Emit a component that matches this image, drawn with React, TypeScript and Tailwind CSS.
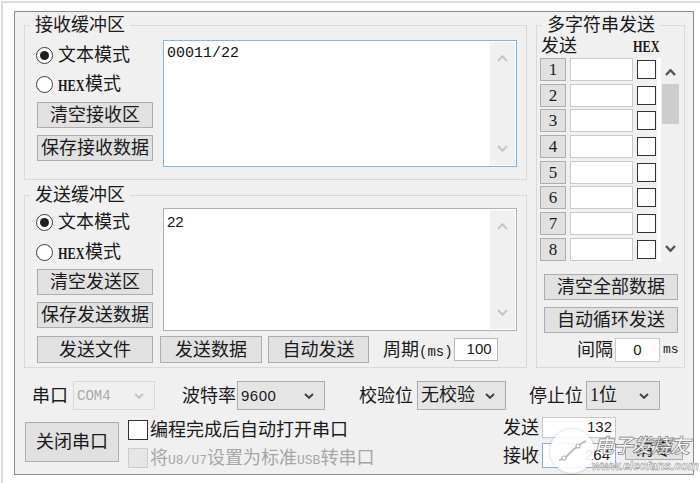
import React from 'react';

function Chev({ up, color, w = 10, h = 6, sw = 2 }: { up?: boolean; color: string; w?: number; h?: number; sw?: number }) {
  return (
    <svg width={w} height={h} viewBox={`0 0 ${w} ${h}`} className="block">
      <polyline
        points={up ? `1,${h - 1} ${w / 2},1.2 ${w - 1},${h - 1}` : `1,1 ${w / 2},${h - 1.2} ${w - 1},1`}
        fill="none"
        stroke={color}
        strokeWidth={sw}
      />
    </svg>
  );
}

function Btn({ children, className = '' }: { children: React.ReactNode; className?: string }) {
  return (
    <div className={`flex items-center justify-center bg-[#e1e1e1] border border-[#adadad] text-[18px] leading-none text-[#1a1a1a] ${className}`}>
      {children}
    </div>
  );
}

function Hex() {
  return (
    <span className="inline-block w-[27px] whitespace-nowrap font-['Liberation_Serif',serif] font-bold text-[17px] leading-none scale-x-[0.72] origin-left align-[-1px]">
      HEX
    </span>
  );
}

function Radio({ checked, hex }: { checked?: boolean; hex?: boolean }) {
  return (
    <div className="flex items-center h-[24px]">
      <div className="w-[17px] h-[17px] rounded-full border border-[#3a3a3a] bg-white flex items-center justify-center">
        {checked && <div className="w-[9px] h-[9px] rounded-full bg-[#1e1e1e]" />}
      </div>
      <span className="ml-[5px] text-[18px] leading-[24px] whitespace-nowrap">
        {hex ? (
          <>
            <Hex />模式
          </>
        ) : (
          '文本模式'
        )}
      </span>
    </div>
  );
}

function TextBox({ className, text, mono }: { className: string; text: string; mono?: boolean }) {
  return (
    <div className={`flex w-[354px] bg-white border ${className}`}>
      <div
        className={`flex-1 pl-[3px] pt-[4px] text-[15px] leading-[18px] text-[#111] ${mono ? "font-['Liberation_Mono',monospace]" : "font-['Liberation_Sans',sans-serif]"}`}
      >
        {text}
      </div>
      <div className="w-[25px] my-[1px] mr-[1px] bg-[#f0f0f0] flex flex-col items-center justify-between py-[13px]">
        <Chev up color="#c6c6c6" w={11} h={7} />
        <Chev color="#c6c6c6" w={11} h={7} />
      </div>
    </div>
  );
}

function Select({ children, disabled, className = '' }: { children: React.ReactNode; disabled?: boolean; className?: string }) {
  return (
    <div
      className={`flex items-center h-[29px] border ${disabled ? 'border-[#d9d9d9] bg-[#f0f0f0] text-[#a8a8a8]' : 'border-[#acacac] bg-[#e5e5e5] text-[#1a1a1a]'} ${className}`}
    >
      <span className="pl-[3px] text-[18px] leading-[27px] whitespace-nowrap">{children}</span>
      <div className="ml-auto mr-[10px]">
        <Chev color={disabled ? '#c4c4c4' : '#444'} w={10} h={6} sw={2} />
      </div>
    </div>
  );
}

function ListRow({ n }: { n: number }) {
  return (
    <div className="flex items-center h-[23px]">
      <Btn className="w-[26px] h-[23px] !text-[17px] font-['Liberation_Serif',serif]">{n}</Btn>
      <div className="ml-[4px] w-[63px] h-[23px] bg-white border border-[#c8c8c8]" />
      <div className="ml-[4px] w-[19px] h-[19px] bg-white border border-[#333]" />
    </div>
  );
}

export default function App() {
  return (
    <div className="relative w-[700px] h-[483px] bg-white pt-[1px] pl-[1px] overflow-hidden font-['Liberation_Sans','Noto_Sans_CJK_SC',sans-serif] text-[#1a1a1a]">
      <div className="h-[482px] border-l-2 border-t-2 border-[#dcdcdc] pl-[11px] pt-[8px]">
        <div className="w-[680px] h-[464px] bg-[#f0f0f0] border border-[#8a8a8a] flex flex-col">
          {/* top groups */}
          <div className="flex pl-[9px] pt-[2px]">
            <div className="flex flex-col">
              {/* 接收缓冲区 */}
              <fieldset className="w-[503px] h-[166px] border border-[#d9d9d9] min-w-0">
                <legend className="ml-[5px] px-[5px] text-[18px] leading-[22px]">接收缓冲区</legend>
                <div className="flex pl-[11px]">
                  <div className="w-[117px] flex flex-col">
                    <div className="mt-[7px]">
                      <Radio checked />
                    </div>
                    <div className="mt-[5px]">
                      <Radio hex />
                    </div>
                    <Btn className="mt-[6px] ml-[1px] w-[116px] h-[26px]">清空接收区</Btn>
                    <Btn className="mt-[7px] ml-[1px] w-[116px] h-[26px]">保存接收数据</Btn>
                  </div>
                  <TextBox className="ml-[10px] mt-[4px] h-[127px] border-[#7eb4ea]" text="00011/22" mono />
                </div>
              </fieldset>

              {/* 发送缓冲区 */}
              <fieldset className="mt-[4px] w-[503px] h-[184px] border border-[#d9d9d9] min-w-0">
                <legend className="ml-[5px] px-[5px] text-[18px] leading-[22px]">发送缓冲区</legend>
                <div className="flex pl-[11px]">
                  <div className="w-[117px] flex flex-col">
                    <div className="mt-[4px]">
                      <Radio checked />
                    </div>
                    <div className="mt-[6px]">
                      <Radio hex />
                    </div>
                    <Btn className="mt-[5px] ml-[1px] w-[116px] h-[26px]">清空发送区</Btn>
                    <Btn className="mt-[7px] ml-[1px] w-[116px] h-[26px]">保存发送数据</Btn>
                  </div>
                  <TextBox className="ml-[10px] mt-[2px] h-[123px] border-[#b0b0b0]" text="22" />
                </div>
                <div className="flex items-center pl-[11px] mt-[5px] h-[27px]">
                  <Btn className="ml-[1px] w-[116px] h-[27px]">发送文件</Btn>
                  <Btn className="ml-[7px] w-[102px] h-[27px]">发送数据</Btn>
                  <Btn className="ml-[6px] w-[101px] h-[27px]">自动发送</Btn>
                  <span className="ml-[14px] text-[18px] leading-none whitespace-nowrap">
                    周期<span className="font-['Liberation_Mono',monospace] text-[14px]">(ms)</span>
                  </span>
                  <div className="ml-[1px] w-[44px] h-[23px] bg-white border border-[#b8b8b8] flex items-center justify-end pr-[5px] text-[15px] font-['Liberation_Sans',sans-serif]">
                    100
                  </div>
                </div>
              </fieldset>
            </div>

            {/* 多字符串发送 */}
            <fieldset className="ml-[9px] w-[149px] h-[354px] border border-[#d9d9d9] min-w-0">
              <legend className="ml-[5px] px-[5px] text-[18px] leading-[22px]">多字符串发送</legend>
              <div className="pl-[3px] flex flex-col">
                <div className="flex items-center h-[20px]">
                  <span className="ml-[1px] text-[18px] leading-[20px]">发送</span>
                  <span className="ml-[56px]">
                    <Hex />
                  </span>
                </div>
                <div className="flex mt-[2px]">
                  <div className="flex flex-col gap-[2.7px]">
                    {[1, 2, 3, 4, 5, 6, 7, 8].map((n) => (
                      <ListRow key={n} n={n} />
                    ))}
                  </div>
                  <div className="ml-[1px] w-[4px] bg-white" />
                  <div className="w-[19px] flex flex-col items-center pt-[11px] pb-[9px]">
                    <Chev up color="#555" w={11} h={7} sw={2.4} />
                    <div className="mt-[8px] w-[17px] h-[40px] bg-[#cdcdcd]" />
                    <div className="mt-auto">
                      <Chev color="#555" w={11} h={7} sw={2.4} />
                    </div>
                  </div>
                </div>
                <Btn className="mt-[13px] ml-[4px] w-[134px] h-[26px]">清空全部数据</Btn>
                <Btn className="mt-[7px] ml-[4px] w-[134px] h-[26px]">自动循环发送</Btn>
                <div className="flex items-center mt-[5px] h-[24px]">
                  <span className="ml-[37px] text-[18px] leading-none">间隔</span>
                  <div className="ml-[2px] w-[45px] h-[24px] bg-white border border-[#c8c8c8] flex items-center justify-center text-[15px] font-['Liberation_Sans',sans-serif]">
                    0
                  </div>
                  <span className="ml-[3px] font-['Liberation_Mono',monospace] text-[13px] leading-none">ms</span>
                </div>
              </div>
            </fieldset>
          </div>

          {/* select row */}
          <div className="flex items-center mt-[13px] h-[29px]">
            <span className="ml-[17px] w-[36px] text-[18px] leading-none">串口</span>
            <Select disabled className="ml-[5px] w-[82px]">
              <span className="font-['Liberation_Mono',monospace] text-[14px]">COM4</span>
            </Select>
            <span className="ml-[27px] w-[54px] text-[18px] leading-none">波特率</span>
            <Select className="ml-[1px] w-[88px]">
              <span className="font-['Liberation_Sans',sans-serif] text-[15px] tracking-[0.5px]">9600</span>
            </Select>
            <span className="ml-[34px] w-[54px] text-[18px] leading-none">校验位</span>
            <Select className="ml-[4px] w-[89px]">无校验</Select>
            <span className="ml-[23px] w-[54px] text-[18px] leading-none">停止位</span>
            <Select className="ml-[3px] w-[74px]">
              <span className="font-['Liberation_Serif',serif]">1</span>位
            </Select>
          </div>

          {/* bottom row */}
          <div className="flex mt-[7px]">
            <Btn className="ml-[10px] mt-[5px] w-[94px] h-[40px]">关闭串口</Btn>
            <div className="ml-[9px] flex flex-col">
              <div className="flex items-center mt-[2px] h-[21px]">
                <div className="w-[20px] h-[20px] bg-white border border-[#333]" />
                <span className="ml-[2px] text-[18px] leading-none">编程完成后自动打开串口</span>
              </div>
              <div className="flex items-center mt-[8px] h-[20px] text-[#a6a6a6]">
                <div className="w-[20px] h-[20px] bg-[#e6e6e6] border border-[#cccccc]" />
                <span className="ml-[2px] text-[18px] leading-none whitespace-nowrap">
                  将<span className="font-['Liberation_Mono',monospace] text-[13px]">U8/U7</span>设置为标准
                  <span className="font-['Liberation_Mono',monospace] text-[13px]">USB</span>转串口
                </span>
              </div>
            </div>
            <div className="ml-auto flex flex-col">
              <div className="flex items-center h-[21px]">
                <span className="w-[36px] text-[18px] leading-none">发送</span>
                <div className="ml-[3px] w-[74px] h-[21px] bg-white border border-[#c8c8c8] flex items-center justify-end pr-[3px] text-[15px] font-['Liberation_Sans',sans-serif]">
                  132
                </div>
              </div>
              <div className="flex items-center mt-[5px] h-[25px]">
                <span className="w-[36px] text-[18px] leading-none">接收</span>
                <div className="ml-[3px] w-[74px] h-[25px] bg-white border border-[#7eb4ea] flex items-center justify-end pr-[5px] text-[15px] font-['Liberation_Sans',sans-serif]">
                  264
                </div>
              </div>
            </div>
            <Btn className="ml-[9px] mr-[10px] mt-[21px] w-[58px] h-[22px]">清零</Btn>
          </div>
        </div>
      </div>

      {/* watermark overlay */}
      <div className="absolute left-[550px] top-[429px] w-[44px] h-[44px] rounded-full bg-white/90 shadow-[0_0_3px_rgba(0,0,0,0.25)]">
        <svg width="44" height="44" viewBox="0 0 44 44" className="block">
          <path d="M9 31 C 16 31, 18 25, 22 22 S 30 14, 36 12" fill="none" stroke="#b5b5b5" strokeWidth="1.6" />
          <circle cx="14" cy="29" r="2" fill="white" stroke="#b5b5b5" strokeWidth="1.2" />
          <circle cx="28" cy="17" r="2" fill="white" stroke="#b5b5b5" strokeWidth="1.2" />
        </svg>
      </div>
      <div className="absolute left-[594px] top-[436px] text-[20px] leading-none italic font-bold text-white/80 [-webkit-text-stroke:0.7px_#7a7a7a] tracking-[-1px] whitespace-nowrap">
        电子发烧友
      </div>
      <div className="absolute left-[592px] top-[460px] text-[12px] leading-none italic font-bold text-white [-webkit-text-stroke:0.5px_#8a8a8a] whitespace-nowrap font-['Liberation_Sans',sans-serif]">
        www.elecfans.com
      </div>
    </div>
  );
}
